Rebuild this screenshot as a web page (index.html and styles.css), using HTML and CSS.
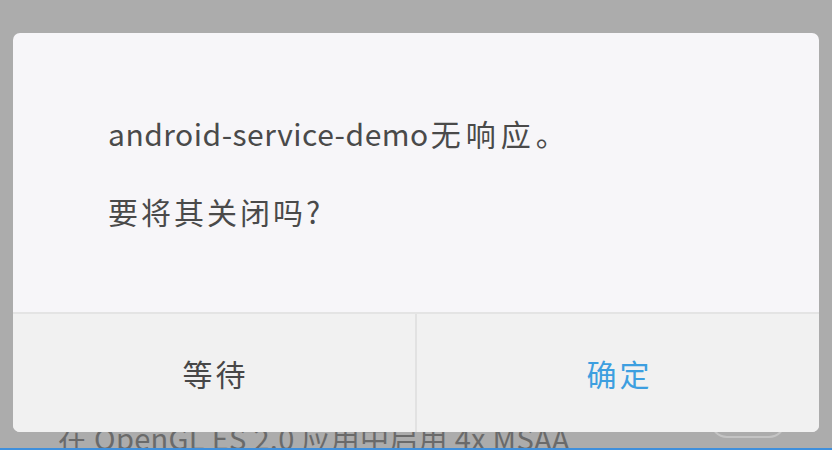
FILE: index.html
```html
<!DOCTYPE html>
<html lang="zh-CN">
<head>
<meta charset="utf-8">
<title>Dialog</title>
<link rel="stylesheet" href="styles.css">
</head>
<body>
<div class="screen">
  <div class="page">
    <div class="row">
      <span class="row-text">在 OpenGL ES 2.0 应用中启用 4x MSAA</span>
      <span class="toggle"></span>
    </div>
  </div>
  <div class="dialog">
    <div class="body">
      <p class="msg">android-service-demo<span class="cjk wide">无响应。</span></p>
      <p class="msg q"><span class="cjk">要将其关闭吗</span>?</p>
    </div>
    <div class="buttons">
      <div class="btn">等待</div>
      <div class="btn primary">确定</div>
    </div>
  </div>
  <div class="bar"></div>
</div>
</body>
</html>
```
FILE: styles.css
```css
* { box-sizing: border-box; }
html, body { margin: 0; padding: 0; }
body {
  width: 832px;
  height: 450px;
  overflow: hidden;
  background: #acacac;
  font-family: "Noto Sans CJK SC", "Noto Sans", sans-serif;
}
.screen {
  position: relative;
  width: 832px;
  height: 450px;
  display: flex;
  flex-direction: column;
}
.page {
  flex: 1;
  display: flex;
  flex-direction: column;
  justify-content: flex-end;
}
.row {
  display: flex;
  align-items: flex-start;
  justify-content: space-between;
  padding: 0 46px 0 58px;
  height: 20px;
}
.row-text {
  font-size: 29px;
  color: #6a6a6a;
  line-height: 30px;
  margin-top: -6px;
  letter-spacing: 0.3px;
}
.toggle {
  width: 76px;
  height: 34px;
  border: 2px solid #c4c4c4;
  border-radius: 17px;
  margin-top: -24px;
}
.bar {
  height: 2px;
  background: #3e8fdc;
}
.dialog {
  position: absolute;
  left: 13px;
  top: 33px;
  width: 806px;
  height: 399px;
  border-radius: 7px;
  background: #f7f6f9;
  overflow: hidden;
  display: flex;
  flex-direction: column;
}
.body {
  height: 279px;
  padding: 80px 0 0 95px;
}
.msg {
  margin: 0;
  font-size: 30px;
  line-height: 40px;
  color: #4a4a4a;
  letter-spacing: 0.5px;
}
.cjk {
  letter-spacing: 3px;
}
.cjk.wide {
  letter-spacing: 5px;
  padding-left: 2px;
}
.msg.q {
  margin-top: 38px;
}
.buttons {
  flex: 1;
  display: flex;
  border-top: 2px solid #e4e4e4;
  background: #f1f1f1;
}
.btn {
  flex: 1;
  display: flex;
  align-items: center;
  justify-content: center;
  font-size: 30px;
  color: #474747;
  letter-spacing: 3px;
  padding-left: 3px;
}
.btn + .btn {
  border-left: 2px solid #e2e2e2;
}
.btn.primary {
  color: #3d9fe0;
}
```
